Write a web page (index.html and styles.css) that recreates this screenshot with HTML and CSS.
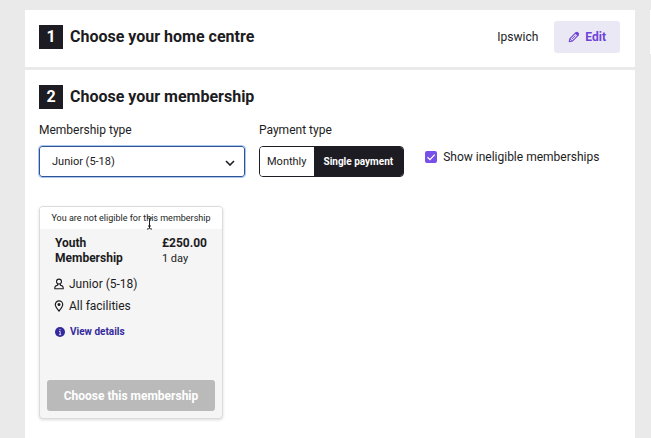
FILE: index.html
```html
<!DOCTYPE html>
<html lang="en">
<head>
<meta charset="utf-8">
<title>Choose your membership</title>
<link rel="stylesheet" href="styles.css">
</head>
<body>
<div class="page">
  <main class="steps">
    <section class="step step-done">
      <h2 class="step-title"><span class="step-number">1</span>Choose your home centre</h2>
      <div class="chosen">
        <span>Ipswich</span>
        <button class="edit" type="button">
          <svg class="edit-icon" viewBox="0 0 14 14" aria-hidden="true"><path d="M1.500 12.500l.8-3.600 6.900-6.900 2.800 2.800-6.900 6.900z" fill="none" stroke="currentColor" stroke-width="1.300" stroke-linejoin="round"/><path d="M8.200 2.900l1.600-1.600q.8-.8 1.600 0l1.300 1.300q.8.8 0 1.600l-1.600 1.600z" fill="currentColor"/><path d="M4.300 9.700l4.400-4.400M2.300 9.200l2.500 2.500" stroke="currentColor" fill="none"/></svg>
          Edit
        </button>
      </div>
    </section>
    <section class="step step-open">
      <h2 class="step-title"><span class="step-number">2</span>Choose your membership</h2>
      <form class="filters">
        <div class="field field-type">
          <label class="label" for="type">Membership type</label>
          <div class="select-wrap">
            <select class="select" id="type"><option>Junior (5-18)</option></select>
            <svg class="chevron" viewBox="0 0 10 6" aria-hidden="true"><path d="M1 1l4 4 4-4" fill="none" stroke="currentColor" stroke-width="1.600"/></svg>
          </div>
        </div>
        <div class="field" role="group" aria-labelledby="payment">
          <span class="label" id="payment">Payment type</span>
          <div class="toggle">
            <button class="toggle-item" type="button">Monthly</button>
            <button class="toggle-item toggle-active" type="button" aria-pressed="true">Single payment</button>
          </div>
        </div>
        <label class="check">
          <span class="check-wrap">
            <input class="check-box" type="checkbox" checked>
            <svg class="check-mark" viewBox="0 0 12 12" aria-hidden="true"><path d="M2.500 6.200l2.500 2.400 4.700-5" fill="none" stroke="currentColor" stroke-width="1.300"/></svg>
          </span>
          Show ineligible memberships
        </label>
      </form>
      <article class="card">
        <p class="notice">You are not eligible for this membership</p>
        <svg class="caret" viewBox="0 0 7 13" aria-hidden="true"><path d="M1 1h1.500l1 1 1-1H6M3.500 2v9M1 12h1.500l1-1 1 1H6M2 9h3" fill="none" stroke="currentColor"/></svg>
        <div class="card-body">
          <div class="card-head">
            <h3 class="card-name">Youth Membership</h3>
            <p class="price"><strong class="amount">£250.00</strong>1 day</p>
          </div>
          <p class="fact">
            <svg class="fact-icon" viewBox="0 0 10 12" aria-hidden="true"><g fill="none" stroke="currentColor" stroke-width="1.100"><circle cx="5" cy="3.600" r="2.500"/><path d="M3.600 5.800v1.400Q.8 7.600.8 9.800V10.800h8.400V9.800Q9.200 7.600 6.400 7.200V5.800"/></g></svg>
            Junior (5-18)
          </p>
          <p class="fact">
            <svg class="fact-icon" viewBox="0 0 10 12" aria-hidden="true"><path d="M5 11Q1.300 6.900 1.300 4.600a3.700 3.700 0 0 1 7.400 0Q8.700 6.900 5 11z" fill="none" stroke="currentColor" stroke-width="1.200"/><circle cx="5" cy="4.600" r="1.500" fill="currentColor"/></svg>
            All facilities
          </p>
          <a class="details" href="#">
            <svg class="details-icon" viewBox="0 0 10 10" aria-hidden="true"><circle cx="5" cy="5" r="5" fill="currentColor"/><path d="M5 2v1.300M4 4.500h1.200v3M4 7.600h2.200" stroke="#d5d0f5" fill="none"/></svg>
            View details
          </a>
          <button class="choose" type="button" disabled>Choose this membership</button>
        </div>
      </article>
    </section>
  </main>
  <aside class="summary"></aside>
</div>
</body>
</html>
```
FILE: styles.css
```css
* {
  box-sizing: border-box;
}

body {
  margin: 0;
  background: #eaeaea;
  color: #1c1c22;
  font: 12px/16px Roboto, "Liberation Sans", sans-serif;
}

h2, h3, p {
  margin: 0;
}

button, select {
  font: inherit;
  color: inherit;
}

.page {
  display: grid;
  grid-template-columns: 1fr 1px;
  gap: 15px;
  min-height: 100vh;
  padding: 10px 0 0 25px;
}

.steps {
  display: flex;
  flex-direction: column;
  gap: 3px;
}

.summary {
  height: 44px;
  background: #fff;
}

.step {
  background: #fff;
  padding: 0 14px;
}

.step-done {
  display: flex;
  align-items: center;
  justify-content: space-between;
  padding: 11px 15px 14px 14px;
}

.step-open {
  flex: 1;
  padding-top: 15px;
  padding-bottom: 20px;
}

.step-title {
  display: flex;
  align-items: center;
  gap: 7px;
  font-size: 16px;
  line-height: 24px;
  font-weight: 700;
}

.step-number {
  width: 24px;
  background: #1c1c22;
  color: #fff;
  text-align: center;
}

.chosen {
  display: flex;
  align-items: center;
  gap: 16px;
}

.edit {
  display: flex;
  align-items: center;
  gap: 5px;
  height: 32px;
  padding: 0 14px;
  border: 0;
  border-radius: 3px;
  background: #ebe8f5;
  color: #6d43d9;
  font-weight: 700;
}

.edit-icon {
  width: 12px;
  height: 12px;
}

.filters {
  display: flex;
  flex-wrap: wrap;
  gap: 14px;
  margin-top: 13px;
}

.field-type {
  width: 206px;
}

.label {
  display: block;
  margin-bottom: 8px;
}

.select-wrap {
  position: relative;
}

.select {
  display: block;
  width: 100%;
  height: 31px;
  padding: 0 12px;
  border: 1px solid #2f5394;
  border-radius: 3px;
  outline: 1px solid #a8c6f2;
  outline-offset: 0;
  background: #fff;
  font-size: 11px;
  appearance: none;
}

.chevron {
  position: absolute;
  right: 10px;
  top: 14px;
  width: 10px;
  height: 6px;
}

.toggle {
  display: flex;
  height: 31px;
  border: 1px solid #1c1c22;
  border-radius: 4px;
  overflow: hidden;
}

.toggle-item {
  padding: 0 7px;
  border: 0;
  background: #fff;
  font-size: 11px;
}

.toggle-active {
  padding: 0 10px;
  background: #1c1c22;
  color: #fff;
  font-size: 10px;
  font-weight: 700;
}

.check {
  display: flex;
  align-items: center;
  gap: 6px;
  padding-top: 15px;
  margin-left: 7px;
}

.check-wrap {
  position: relative;
  width: 12px;
  height: 12px;
}

.check-box {
  display: block;
  width: 12px;
  height: 12px;
  margin: 0;
  border-radius: 2px;
  background: #7650e8;
  appearance: none;
}

.check-mark {
  position: absolute;
  inset: 0;
  color: #fff;
}

.card {
  position: relative;
  width: 184px;
  margin-top: 29px;
  border: 1px solid #dcdcdc;
  border-radius: 4px;
  background: #f5f5f5;
  box-shadow: 0 1px 3px #00000026;
  overflow: hidden;
}

.notice {
  padding: 3px 0;
  background: #fff;
  font-size: 9px;
  text-align: center;
}

.caret {
  position: absolute;
  left: 106px;
  top: 10px;
  width: 7px;
  height: 13px;
}

.card-body {
  padding: 7px;
}

.card-head {
  display: flex;
  justify-content: space-between;
  padding: 0 8px 7px;
  line-height: 15px;
}

.card-name {
  width: 80px;
  font-size: 12px;
  font-weight: 700;
}

.price {
  font-size: 11px;
}

.amount {
  display: block;
  font-size: 12px;
}

.fact {
  display: flex;
  align-items: center;
  gap: 5px;
  padding: 0 7px;
  line-height: 22px;
}

.fact-icon {
  width: 10px;
  height: 12px;
}

.details {
  display: flex;
  align-items: center;
  gap: 5px;
  margin: 7px 8px 0;
  color: #342a9c;
  font-size: 10px;
  font-weight: 700;
  text-decoration: none;
}

.details-icon {
  width: 10px;
  height: 10px;
}

.choose {
  display: block;
  width: 100%;
  height: 31px;
  margin-top: 40px;
  padding: 0;
  border: 0;
  border-radius: 3px;
  background: #bababa;
  color: #fff;
  font-weight: 700;
}
```
